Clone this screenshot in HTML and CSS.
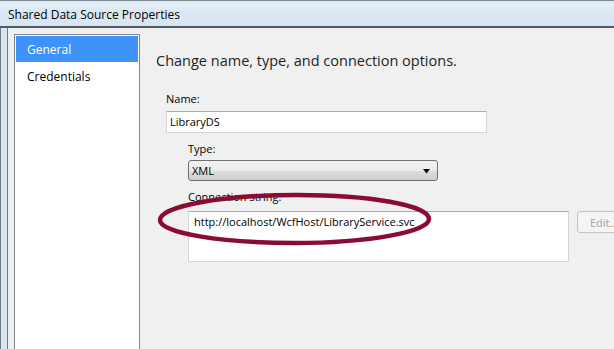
FILE: index.html
```html
<!DOCTYPE html>
<html lang="en">
<head>
  <meta charset="UTF-8" />
  <title>Shared Data Source Properties</title>
  <link rel="stylesheet" href="styles.css">
</head>
<body>
  <div class="window">
    <!-- ======= TITLE BAR ======= -->
    <div class="titlebar">Shared Data Source Properties</div>

    <div class="frame">
      <div class="frame-edge"></div>

      <div class="client">
        <!-- ======= PAGE LIST ======= -->
        <ul class="pages">
          <li class="page selected">General</li>
          <li class="page">Credentials</li>
        </ul>

        <!-- ======= GENERAL PAGE ======= -->
        <section class="general">
          <h1>Change name, type, and connection options.</h1>

          <div class="field-group">
            <label class="lbl">Name:</label>
            <div class="textbox name-box">LibraryDS</div>
          </div>

          <div class="sub">
            <label class="lbl">Type:</label>
            <div class="combo">
              <span>XML</span>
              <svg class="arrow" width="8" height="5" viewBox="0 0 8 5"><path d="M0 0h7L3.5 4.5z" fill="#000"/></svg>
            </div>

            <label class="lbl conn-lbl">Connection string:</label>
            <div class="conn-row">
              <div class="textbox conn-box">http://localhost/WcfHost/LibraryService.svc</div>
              <button class="edit-btn" disabled>Edit...</button>
            </div>
          </div>

          <!-- hand drawn callout -->
          <svg class="callout" width="280" height="56" viewBox="0 0 280 56">
            <path d="M140 3 C 212 3, 272 13, 272 27 C 272 40, 210 51, 138 51 C 64 51, 3 41, 3 28 C 3 14, 66 3, 140 3 Z"
                  fill="none" stroke="#8a0b33" stroke-width="4.5"/>
          </svg>
        </section>
      </div>
    </div>
  </div>
</body>
</html>
```

FILE: styles.css
```css
/* ======= GLOBAL RESET ======= */
*,*::before,*::after{box-sizing:border-box;margin:0;padding:0}

body {
  width: 614px;
  height: 349px;
  overflow: hidden;
  font-family: "Open Sans", "Noto Sans", sans-serif;
  font-size: 11px;
  color: #000;
  background: #f0f0f0;
}

.window {
  width: 100%;
  height: 100%;
  display: flex;
  flex-direction: column;
}

/* ======= TITLE BAR ======= */
.titlebar {
  height: 28px;
  flex: none;
  padding: 5px 0 0 8px;
  font-size: 12px;
  color: #000;
  background: linear-gradient(#d6e3ee 0, #e6eff7 3px, #dbe8f3 40%, #d8e5f1 100%);
  border-top: 1px solid #7c8a96;
  border-bottom: 2px solid #505c66;
}

.frame {
  flex: 1;
  display: flex;
  min-height: 0;
}
.frame-edge {
  width: 8px;
  flex: none;
  background: #d9e6f1;
  border-left: 1px solid #6d7b88;
  border-right: 1px solid #6d7b88;
}

.client {
  flex: 1;
  display: flex;
  padding: 6px 0 0 6px;
  background: #f0f0f0;
  position: relative;
}

/* ======= PAGE LIST ======= */
.pages {
  list-style: none;
  width: 126px;
  flex: none;
  background: #fff;
  border: 1px solid #828790;
  border-bottom: none;
  padding: 1px;
}
.page {
  height: 27px;
  padding: 5px 0 0 11px;
  font-size: 12px;
}
.page.selected {
  background: #3d93f7;
  color: #fff;
  height: 26px;
  margin-bottom: 1px;
}

/* ======= GENERAL PAGE ======= */
.general {
  flex: 1;
  padding: 17px 0 0 16px;
  position: relative;
}
.general h1 {
  font-size: 14.5px;
  font-weight: 400;
  color: #1e1e1e;
  margin-bottom: 22px;
}

.lbl {
  display: block;
  font-size: 11px;
  line-height: 14px;
}
.field-group { padding-left: 10px; }

.textbox {
  background: #fff;
  border: 1px solid #d5d5d5;
  border-top-color: #abadb3;
  font-size: 11px;
  padding: 2px 3px;
}
.name-box {
  width: 321px;
  height: 22px;
  margin-top: 5px;
}

.sub {
  padding-left: 32px;
  margin-top: 9px;
}
.combo {
  width: 250px;
  height: 21px;
  margin-top: 4px;
  border: 1px solid #707070;
  border-radius: 3px;
  background: linear-gradient(#f2f2f2 0, #ebebeb 50%, #dddddd 51%, #cfcfcf 100%);
  display: flex;
  align-items: center;
  justify-content: space-between;
  padding: 0 6px 0 3px;
  font-size: 11px;
}
.arrow { margin-top: 1px; }

.conn-lbl { margin-top: 9px; }
.conn-row {
  display: flex;
  gap: 8px;
  margin-top: 7px;
}
.conn-box {
  width: 381px;
  height: 51px;
  padding: 2px 5px;
}
.edit-btn {
  width: 60px;
  height: 22px;
  font-family: inherit;
  font-size: 11px;
  color: #a0a0a0;
  text-align: left;
  padding-left: 12px;
  background: #f4f4f4;
  border: 1px solid #c4c4c4;
  border-radius: 3px;
}

.callout {
  position: absolute;
  left: 17px;
  top: 158px;
  pointer-events: none;
}
```
